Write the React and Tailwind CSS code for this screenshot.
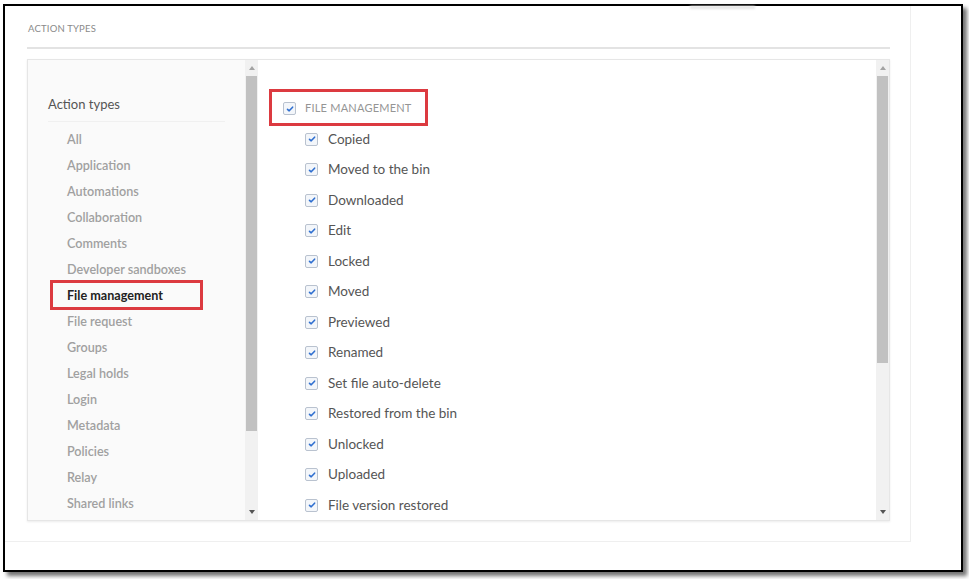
const actionTypes = [
  'All',
  'Application',
  'Automations',
  'Collaboration',
  'Comments',
  'Developer sandboxes',
  'File management',
  'File request',
  'Groups',
  'Legal holds',
  'Login',
  'Metadata',
  'Policies',
  'Relay',
  'Shared links',
];

const fileEvents = [
  'Copied',
  'Moved to the bin',
  'Downloaded',
  'Edit',
  'Locked',
  'Moved',
  'Previewed',
  'Renamed',
  'Set file auto-delete',
  'Restored from the bin',
  'Unlocked',
  'Uploaded',
  'File version restored',
];

function Checkbox() {
  return (
    <span className="flex h-[13px] w-[13px] shrink-0 items-center justify-center rounded-[2px] border border-[#b9c2cf] bg-[#f3f6fa]">
      <svg width="8" height="8" viewBox="0 0 8 8">
        <path d="M1.5 4.3 L3.2 5.8 L6.6 2.2" fill="none" stroke="#2f6fd0" strokeWidth="1.6" strokeLinecap="round" strokeLinejoin="round" />
      </svg>
    </span>
  );
}

function Scrollbar({ thumbHeight }) {
  return (
    <div className="flex w-[13px] shrink-0 flex-col bg-[#f1f1f1]">
      <div className="flex h-[16px] items-center justify-center">
        <svg width="6" height="4" viewBox="0 0 6 4"><path d="M0 4 L3 0 L6 4 Z" fill="#a3a3a3" /></svg>
      </div>
      <div className="flex-1">
        <div className="mx-[1px] bg-[#c1c1c1]" style={{ height: thumbHeight }} />
      </div>
      <div className="flex h-[16px] items-center justify-center">
        <svg width="6" height="4" viewBox="0 0 6 4"><path d="M0 0 L6 0 L3 4 Z" fill="#555" /></svg>
      </div>
    </div>
  );
}

export default function App() {
  return (
    <div className="h-[579px] w-[969px] bg-white pl-[3px] pt-[4px]" style={{ fontFamily: 'Lato, "Open Sans", sans-serif' }}>
      <div className="h-[568px] w-[960px] border-2 border-black bg-white shadow-[4px_4px_4px_rgba(0,0,0,0.55)]">
        <div className="relative h-[536px] w-[906px] border-b border-r border-[#efefef] pl-[22px] pr-[20px] pt-[16px]">
          <div className="absolute left-[685px] top-0 h-[3px] w-[65px] bg-[#e4e4e4] blur-[1px]" />
          <div className="border-b-2 border-[#e3e3e3] pb-[11px] pl-[1px] text-[9.5px] uppercase tracking-[0.02em] text-[#8a8a8a]">
            Action types
          </div>

          <div className="mt-[10px] flex h-[462px] border border-[#e6e6e6] shadow-[0_1px_2px_rgba(0,0,0,0.08)]">
            <div className="w-[217px] shrink-0 bg-[#fafafa] pl-[20px] pr-[20px] pt-[36px]">
              <div className="h-[16px] text-[13px] leading-[16px] text-[#555]">Action types</div>
              <div className="mt-[9px] border-b border-[#f0f0f0]" />
              <ul className="pt-[5px]">
                {actionTypes.map((t) => (
                  <li
                    key={t}
                    className={
                      'relative flex h-[26px] items-center pl-[19px] text-[12.6px] ' +
                      (t === 'File management' ? 'font-bold text-[#222]' : 'font-semibold text-[#a0a0a0]')
                    }
                  >
                    {t}
                    {t === 'File management' && (
                      <span className="absolute left-[2px] top-[-3px] h-[30px] w-[153px] border-[3px] border-[#dc3a40]" />
                    )}
                  </li>
                ))}
              </ul>
            </div>

            <Scrollbar thumbHeight={355} />

            <div className="flex-1 pl-[25px] pt-[33px]">
              <div className="relative flex h-[30.5px] items-center">
                <span className="absolute left-[-14px] top-[-4px] h-[37px] w-[159px] border-[3px] border-[#dc3a40]" />
                <Checkbox />
                <span className="ml-[9px] text-[11px] uppercase tracking-[0.02em] text-[#959595]">File management</span>
              </div>
              <ul className="pl-[22px]">
                {fileEvents.map((e) => (
                  <li key={e} className="flex h-[30.5px] items-center">
                    <Checkbox />
                    <span className="ml-[10px] text-[13.5px] text-[#555]">{e}</span>
                  </li>
                ))}
              </ul>
            </div>

            <Scrollbar thumbHeight={287} />
          </div>
        </div>
      </div>
    </div>
  );
}
